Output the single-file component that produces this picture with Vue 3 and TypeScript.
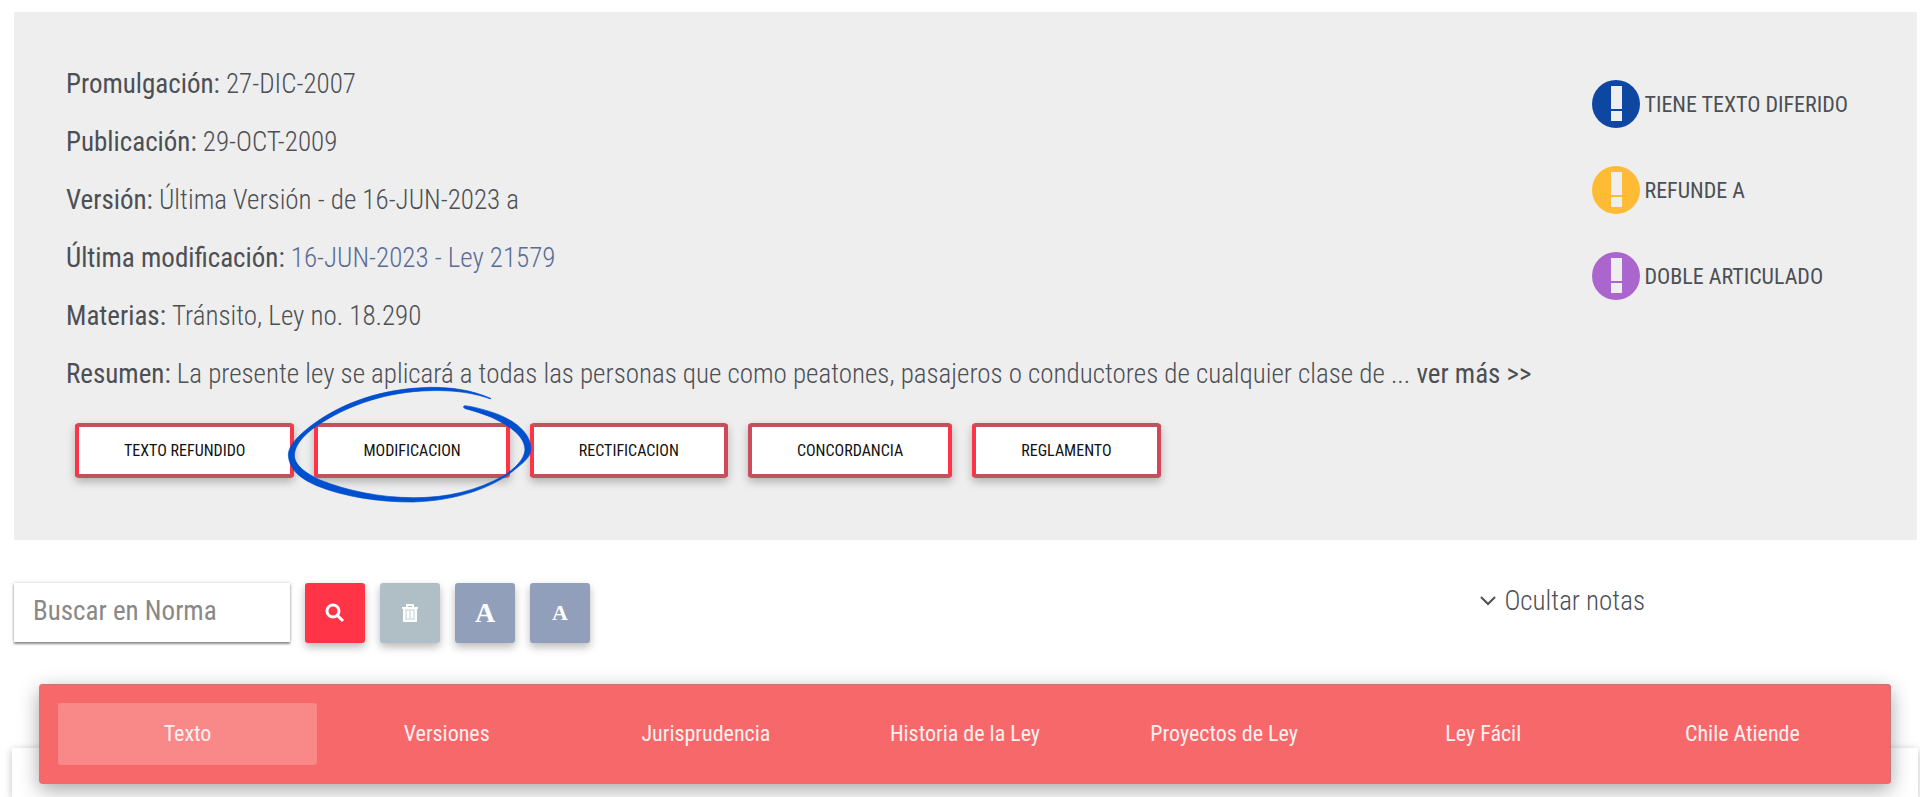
<script setup lang="ts">
interface Field { label: string; value: string; href?: string }
interface Notice { text: string; color: string }

const fields: Field[] = [
  { label: 'Promulgación:', value: '27-DIC-2007' },
  { label: 'Publicación:', value: '29-OCT-2009' },
  { label: 'Versión:', value: 'Última Versión - de 16-JUN-2023 a' },
  { label: 'Última modificación:', value: '16-JUN-2023 - Ley 21579', href: '#ley-21579' },
  { label: 'Materias:', value: 'Tránsito, Ley no. 18.290' },
]
const notices: Notice[] = [
  { text: 'TIENE TEXTO DIFERIDO', color: '#0d47a1' },
  { text: 'REFUNDE A', color: '#ffbb33' },
  { text: 'DOBLE ARTICULADO', color: '#aa66cc' },
]
const links: string[] = ['TEXTO REFUNDIDO', 'MODIFICACION', 'RECTIFICACION', 'CONCORDANCIA', 'REGLAMENTO']
const tabs: string[] = ['Texto', 'Versiones', 'Jurisprudencia', 'Historia de la Ley', 'Proyectos de Ley', 'Ley Fácil', 'Chile Atiende']
</script>

<template>
  <main class="page">
    <section class="summary">
      <div class="details">
        <p v-for="f in fields" :key="f.label" class="field">
          <strong>{{ f.label }}</strong>&nbsp;<a v-if="f.href" :href="f.href">{{ f.value }}</a><span v-else>{{ f.value }}</span>
        </p>
        <p class="field">
          <strong>Resumen:</strong> La presente ley se aplicará a todas las personas que como peatones, pasajeros o conductores de cualquier clase de ... <a class="more" href="#resumen">ver más &gt;&gt;</a>
        </p>
        <div class="links">
          <div v-for="l in links" :key="l" class="link-slot">
            <button type="button" class="link">{{ l }}</button>
            <svg v-if="l === 'MODIFICACION'" class="ring" viewBox="0 0 810 450" aria-hidden="true">
              <path d="M632 85C570 58 510 52 450 52C300 56 190 100 110 155C60 190 25 225 25 255C28 300 60 325 110 347C190 380 300 397 400 396C520 392 620 360 690 310C735 275 753 260 753 235C750 180 690 145 640 128C610 118 580 110 555 107C548 108 550 114 556 116C590 125 630 138 655 152C700 175 735 205 735 240C732 270 705 295 670 318C590 362 500 384 400 383C300 383 200 362 120 330C75 308 43 285 43 255C45 220 80 185 130 155C210 105 320 65 450 62C520 60 580 68 632 87Z" />
            </svg>
          </div>
        </div>
      </div>
      <ul class="notices">
        <li v-for="n in notices" :key="n.text">
          <svg viewBox="0 0 48 48" aria-hidden="true">
            <circle cx="24" cy="24" r="24" :fill="n.color" />
            <path d="M19 6h11v23H19zM19 31h11v10H19z" fill="#eee" />
          </svg>
          <span>{{ n.text }}</span>
        </li>
      </ul>
    </section>

    <form class="tools" @submit.prevent>
      <input type="search" placeholder="Buscar en Norma" aria-label="Buscar en Norma" />
      <button type="submit" class="tool search" aria-label="Buscar">
        <svg viewBox="0 0 20 20"><circle cx="8" cy="8" r="6" /><path d="M12 12l6 6" /></svg>
      </button>
      <button type="button" class="tool clear" aria-label="Borrar">
        <svg viewBox="0 0 20 20"><path class="can" d="M4 6h12v12H4z" /><path class="lid" d="M7 4V2h6v2M2 5h16M4 6v12h12V6M8 8v7M12 8v7" /></svg>
      </button>
      <button type="button" class="tool size big" aria-label="A, aumentar texto">A</button>
      <button type="button" class="tool size" aria-label="A, reducir texto">A</button>
      <button type="button" class="notes">
        <svg viewBox="0 0 16 10" aria-hidden="true"><path d="M1 1l7 7l7-7" /></svg>Ocultar notas
      </button>
    </form>

    <section class="content">
      <nav class="tabs">
        <a v-for="(t, i) in tabs" :key="t" href="#contenido" :class="{ active: i === 0 }">{{ t }}</a>
      </nav>
    </section>
  </main>
</template>

<style>
body { margin: 0; background: #fff; }
</style>

<style scoped>
.page { font-family: "Roboto Condensed", "Liberation Sans Narrow", Roboto, sans-serif; color: #4c4f54; padding: 12px 3px 0 14px; min-height: 100vh; box-sizing: border-box; display: flex; flex-direction: column; overflow: hidden; }
.summary { background: #eee; padding: 43px 69px 62px 52px; display: flex; justify-content: space-between; }
.field { margin: 0; font-size: 27px; line-height: 58px; font-weight: 300; white-space: nowrap; }
.field strong, .more { font-weight: 400; }
.field a { color: #5b6b95; text-decoration: none; }
.field .more { color: inherit; }
.links { display: flex; gap: 20px; padding: 20px 0 0 9px; }
.link-slot { position: relative; }
.link { font: 400 16px/47px "Roboto Condensed", "Liberation Sans Narrow", Roboto, sans-serif; color: #111; background: #fff; border: 4px solid #ff3547; border-top-color: #bd545d; border-bottom-color: #bd545d; border-radius: 4px; padding: 0 45px; box-shadow: 0 4px 8px rgba(0,0,0,.25); display: block; }
.link-slot:nth-child(2n+3) .link { border-right-color: #d0495a; }
.link-slot:nth-child(4) .link { border-left-color: #c94d5b; }
.ring { position: absolute; left: -34px; top: -53px; width: 270px; height: 150px; fill: #004fcf; stroke: #004fcf; stroke-width: 2; pointer-events: none; z-index: 1; }
.notices { list-style: none; margin: 25px 0 0; padding: 0; display: flex; flex-direction: column; gap: 38px; font-size: 22px; white-space: nowrap; }
.notices li { display: flex; align-items: center; gap: 4px; }
.notices svg { width: 48px; height: 48px; flex: none; }
.tools { display: flex; align-items: flex-start; gap: 15px; padding: 43px 272px 0 0; }
input { font: 400 27px/56px "Roboto Condensed", "Liberation Sans Narrow", Roboto, sans-serif; width: 276px; height: 59px; box-sizing: border-box; border: 0; padding: 0 19px 3px; box-shadow: 0 2px 2px rgba(0,0,0,.4), 0 0 4px rgba(0,0,0,.2); appearance: none; }
input::placeholder { color: #888; opacity: 1; }
.tool { width: 60px; height: 60px; border: 0; border-radius: 3px; color: #fff; box-shadow: 0 4px 8px rgba(0,0,0,.28); padding: 0; display: grid; place-items: center; }
.tool svg { width: 20px; height: 20px; fill: none; stroke: #fff; stroke-width: 3; }
.tool .can { fill: #dfe6e8; stroke: none; }
.tool .lid { stroke-width: 2; }
.search { background: #ff3547; }
.clear { background: #b0bec5; }
.size { background: #929fba; font: 700 22px "Liberation Serif", serif; }
.big { font-size: 28px; }
.notes { margin-left: auto; font: 300 27px/36px "Roboto Condensed", "Liberation Sans Narrow", Roboto, sans-serif; color: #4c4f54; border: 0; background: none; padding: 0; display: flex; align-items: center; gap: 8px; }
.notes svg { width: 16px; height: 10px; fill: none; stroke: #4c4f54; stroke-width: 2; }
.content { flex: 1; margin: 105px -1px 0 -2px; box-shadow: 0 2px 8px rgba(0,0,0,.25); }
.tabs { margin: -64px 27px 0; background: #f7686b; border-radius: 4px; padding: 19px; display: flex; box-shadow: 0 6px 20px rgba(0,0,0,.35), inset -1px 1px #c9747b; }
.tabs a { flex: 1; text-align: center; color: #fff0f0; font-size: 22px; line-height: 62px; text-decoration: none; border-radius: 3px; }
.tabs .active { background: #f98888; }
</style>
